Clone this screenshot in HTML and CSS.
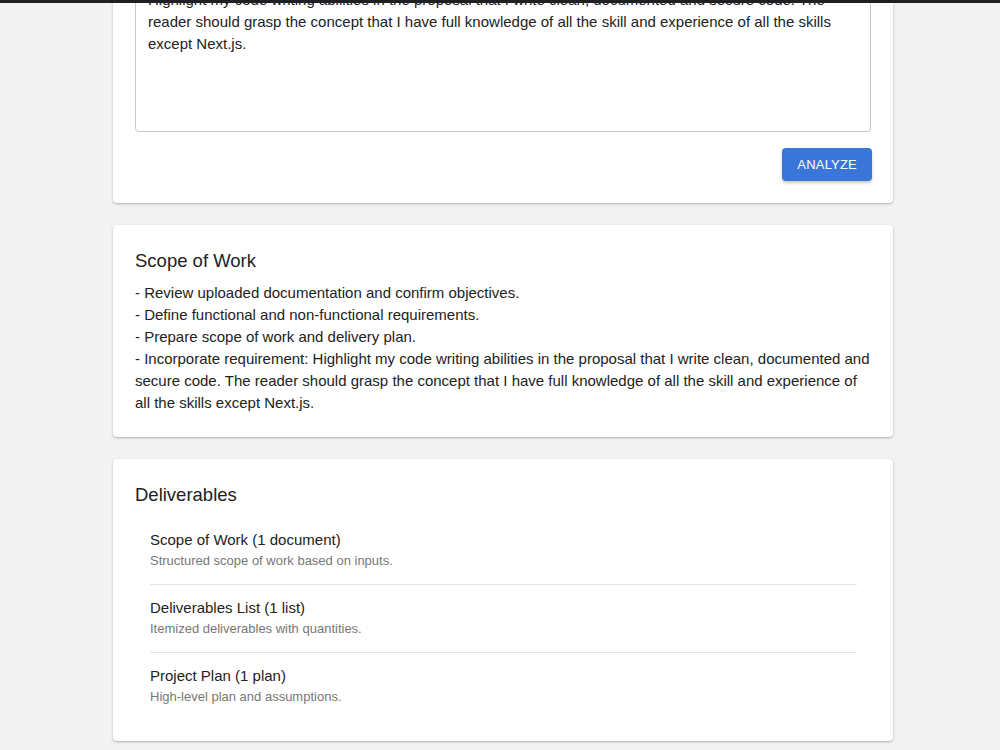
FILE: index.html
```html
<!DOCTYPE html>
<html lang="en">
<head>
<meta charset="utf-8">
<title>Proposal</title>
<link rel="stylesheet" href="styles.css">
</head>
<body>
<div class="topbar"></div>
<main class="page">
  <section class="card input-card">
    <textarea class="prompt" readonly>Highlight my code writing abilities in the proposal that I write clean, documented and secure code. The reader should grasp the concept that I have full knowledge of all the skill and experience of all the skills except Next.js.</textarea>
    <div class="actions">
      <button class="btn" type="button">Analyze</button>
    </div>
  </section>

  <section class="card">
    <h2 class="card-title">Scope of Work</h2>
    <div class="scope-text">
      <p>- Review uploaded documentation and confirm objectives.</p>
      <p>- Define functional and non-functional requirements.</p>
      <p>- Prepare scope of work and delivery plan.</p>
      <p>- Incorporate requirement: Highlight my code writing abilities in the proposal that I write clean, documented and secure code. The reader should grasp the concept that I have full knowledge of all the skill and experience of all the skills except Next.js.</p>
    </div>
  </section>

  <section class="card">
    <h2 class="card-title">Deliverables</h2>
    <ul class="deliv-list">
      <li class="deliv-item">
        <div class="deliv-primary">Scope of Work (1 document)</div>
        <div class="deliv-secondary">Structured scope of work based on inputs.</div>
      </li>
      <li class="deliv-item">
        <div class="deliv-primary">Deliverables List (1 list)</div>
        <div class="deliv-secondary">Itemized deliverables with quantities.</div>
      </li>
      <li class="deliv-item">
        <div class="deliv-primary">Project Plan (1 plan)</div>
        <div class="deliv-secondary">High-level plan and assumptions.</div>
      </li>
    </ul>
  </section>
</main>
</body>
</html>
```

FILE: styles.css
```css
* { box-sizing: border-box; }

html, body {
  margin: 0;
  padding: 0;
  background: #f3f3f3;
  font-family: "Liberation Sans", Arial, Helvetica, sans-serif;
  color: #222;
}

.topbar {
  position: fixed;
  top: 0;
  left: 0;
  right: 0;
  height: 3px;
  background: #1f1f24;
  z-index: 10;
}

.page {
  width: 780px;
  margin: -46px 0 0 calc(50% - 387px);
  display: flex;
  flex-direction: column;
  gap: 22px;
  padding-bottom: 40px;
}

.card {
  background: #fff;
  border-radius: 4px;
  box-shadow: 0 1px 3px rgba(0,0,0,0.22), 0 1px 1px rgba(0,0,0,0.08);
  padding: 22px 22px 23px;
}

.input-card {
  padding-bottom: 22px;
}

.prompt {
  display: block;
  width: 100%;
  height: 156px;
  resize: none;
  border: 1px solid #c6c6c6;
  border-radius: 4px;
  padding: 12px;
  font-family: "Liberation Sans", Arial, Helvetica, sans-serif;
  font-size: 15px;
  line-height: 22px;
  color: #222;
  background: #fff;
  outline: none;
  overflow: hidden;
}

.actions {
  display: flex;
  justify-content: flex-end;
  margin-top: 16px;
}

.btn {
  height: 33px;
  padding: 0 15px;
  border: none;
  border-radius: 4px;
  background: #3976d7;
  color: #fff;
  font-family: "Liberation Sans", Arial, Helvetica, sans-serif;
  font-size: 13px;
  letter-spacing: 0.2px;
  text-transform: uppercase;
  box-shadow: 0 2px 3px rgba(0,0,0,0.22);
  cursor: pointer;
  margin-right: -1px;
}

.card-title {
  margin: 0;
  padding-top: 1px;
  font-size: 18.5px;
  font-weight: 400;
  line-height: 26px;
  color: #222;
}

.scope-text {
  margin-top: 8px;
  font-size: 15px;
  line-height: 22px;
  color: #222;
}

.scope-text p {
  margin: 0;
}

.deliv-list {
  list-style: none;
  margin: 9px 14px 0 15px;
  padding: 0;
}

.deliv-item {
  padding: 12px 0 13px;
  border-bottom: 1px solid #e6e6e6;
}

.deliv-item:last-child {
  border-bottom: none;
  padding-bottom: 11px;
}

.deliv-primary {
  font-size: 15px;
  line-height: 22px;
  color: #222;
}

.deliv-secondary {
  font-size: 13px;
  line-height: 20px;
  color: #777;
}
```
